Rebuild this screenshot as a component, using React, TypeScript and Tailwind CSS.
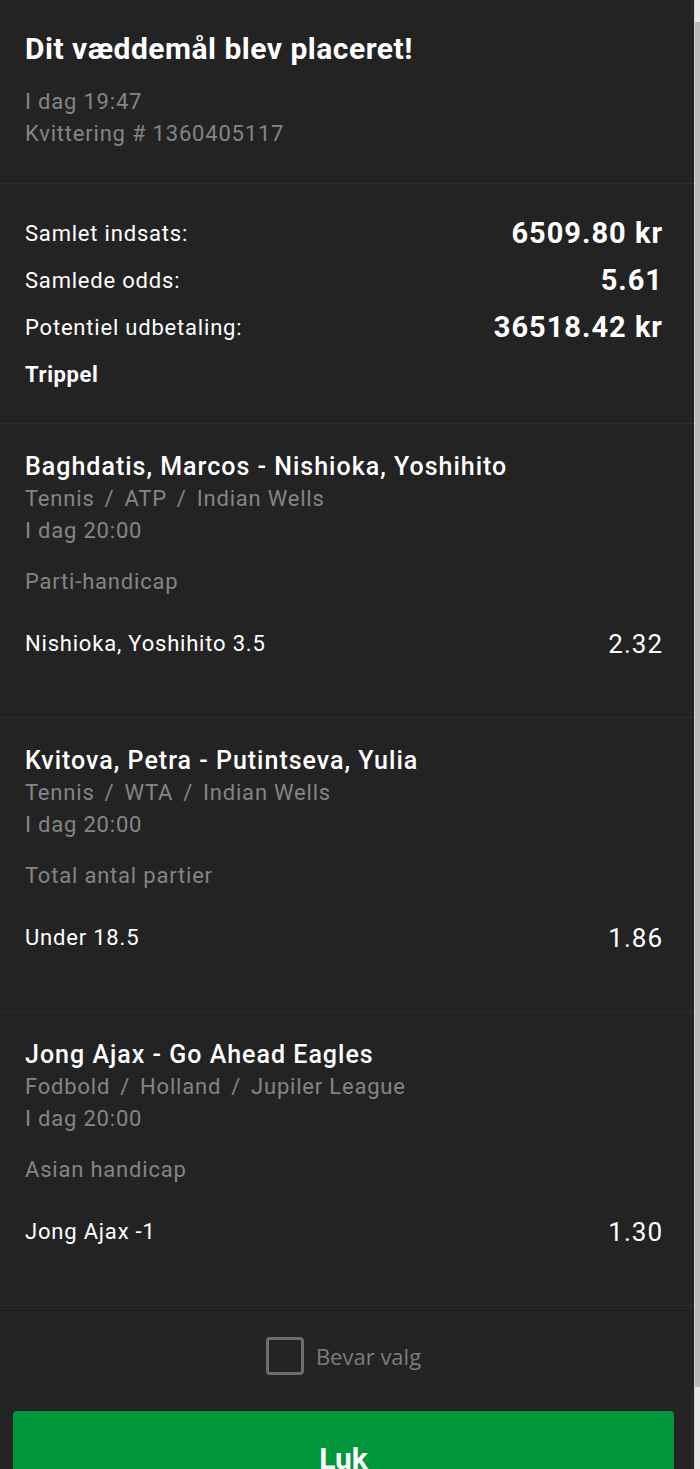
import React from 'react'

type Bet = {
  match: string
  path: string[]
  time: string
  market: string
  pick: string
  odds: string
}

const bets: Bet[] = [
  {
    match: 'Baghdatis, Marcos - Nishioka, Yoshihito',
    path: ['Tennis', 'ATP', 'Indian Wells'],
    time: 'I dag 20:00',
    market: 'Parti-handicap',
    pick: 'Nishioka, Yoshihito 3.5',
    odds: '2.32',
  },
  {
    match: 'Kvitova, Petra - Putintseva, Yulia',
    path: ['Tennis', 'WTA', 'Indian Wells'],
    time: 'I dag 20:00',
    market: 'Total antal partier',
    pick: 'Under 18.5',
    odds: '1.86',
  },
  {
    match: 'Jong Ajax - Go Ahead Eagles',
    path: ['Fodbold', 'Holland', 'Jupiler League'],
    time: 'I dag 20:00',
    market: 'Asian handicap',
    pick: 'Jong Ajax -1',
    odds: '1.30',
  },
]

const summary = [
  { label: 'Samlet indsats:', value: '6509.80 kr' },
  { label: 'Samlede odds:', value: '5.61' },
  { label: 'Potentiel udbetaling:', value: '36518.42 kr' },
]

function BetRow({ bet }: { bet: Bet }) {
  return (
    <div className="border-t border-[#2e2e2e] pl-[25px] pr-[31px] pt-[27px] pb-[57px]">
      <div className="text-[25px] leading-[32px] font-medium tracking-[1px] text-white">{bet.match}</div>
      <div className="text-[22px] leading-[32px] tracking-[0.8px] text-[#858585]">
        {bet.path.map((p, i) => (
          <span key={p}>
            {i > 0 && <span className="mx-[10px]">/</span>}
            {p}
          </span>
        ))}
      </div>
      <div className="text-[22px] leading-[32px] tracking-[0.8px] text-[#858585]">{bet.time}</div>
      <div className="mt-[19px] text-[22px] leading-[32px] tracking-[0.8px] text-[#858585]">{bet.market}</div>
      <div className="mt-[30px] flex items-center justify-between">
        <span className="text-[22px] leading-[32px] tracking-[0.8px] text-white">{bet.pick}</span>
        <span className="text-[26px] leading-[32px] tracking-[1px] text-white">{bet.odds}</span>
      </div>
    </div>
  )
}

export default function App() {
  return (
    <div className="flex h-[1469px] overflow-hidden bg-[#232323] font-['Roboto',sans-serif]">
      <div className="flex-1">
        <div className="pl-[25px] pr-[31px] pt-[32px] pb-[33px]">
          <h1 className="text-[30px] leading-[34px] font-bold tracking-[0.5px] text-white">Dit væddemål blev placeret!</h1>
          <div className="mt-[20px] text-[22px] leading-[32px] tracking-[0.8px] text-[#858585]">I dag 19:47</div>
          <div className="text-[22px] leading-[32px] tracking-[0.8px] text-[#858585]">Kvittering # 1360405117</div>
        </div>

        <div className="border-t border-[#2e2e2e] pl-[25px] pr-[31px] pt-[26px] pb-[25px]">
          {summary.map(row => (
            <div key={row.label} className="flex h-[47px] items-center justify-between">
              <span className="text-[22px] tracking-[0.8px] text-white">{row.label}</span>
              <span className="text-[29px] font-bold tracking-[1px] text-white">{row.value}</span>
            </div>
          ))}
          <div className="flex h-[47px] items-center text-[22px] font-bold tracking-[0.6px] text-white">Trippel</div>
        </div>

        {bets.map(bet => (
          <BetRow key={bet.match} bet={bet} />
        ))}

        <div className="border-t border-[#2e2e2e] pt-[31px]">
          <label className="flex items-center justify-center gap-[12px] pr-[7px]">
            <span className="h-[38px] w-[38px] rounded-[4px] border-[3px] border-[#6e6e6e]" />
            <span className="font-['Open_Sans',sans-serif] text-[22px] text-[#7c7c7c]">Bevar valg</span>
          </label>
          <button className="mt-[36px] ml-[13px] mr-[20px] flex h-[94px] w-[661px] items-center justify-center rounded-[4px] bg-[#00963a] text-[30px] font-bold text-white">
            Luk
          </button>
        </div>
      </div>

      <div className="flex w-[6px] flex-col border-l border-[#d6d6d6] bg-[#eaeaea]">
        <div className="h-[22px]" />
        <div className="h-[1365px] bg-[#bdbdbd]" />
      </div>
    </div>
  )
}
